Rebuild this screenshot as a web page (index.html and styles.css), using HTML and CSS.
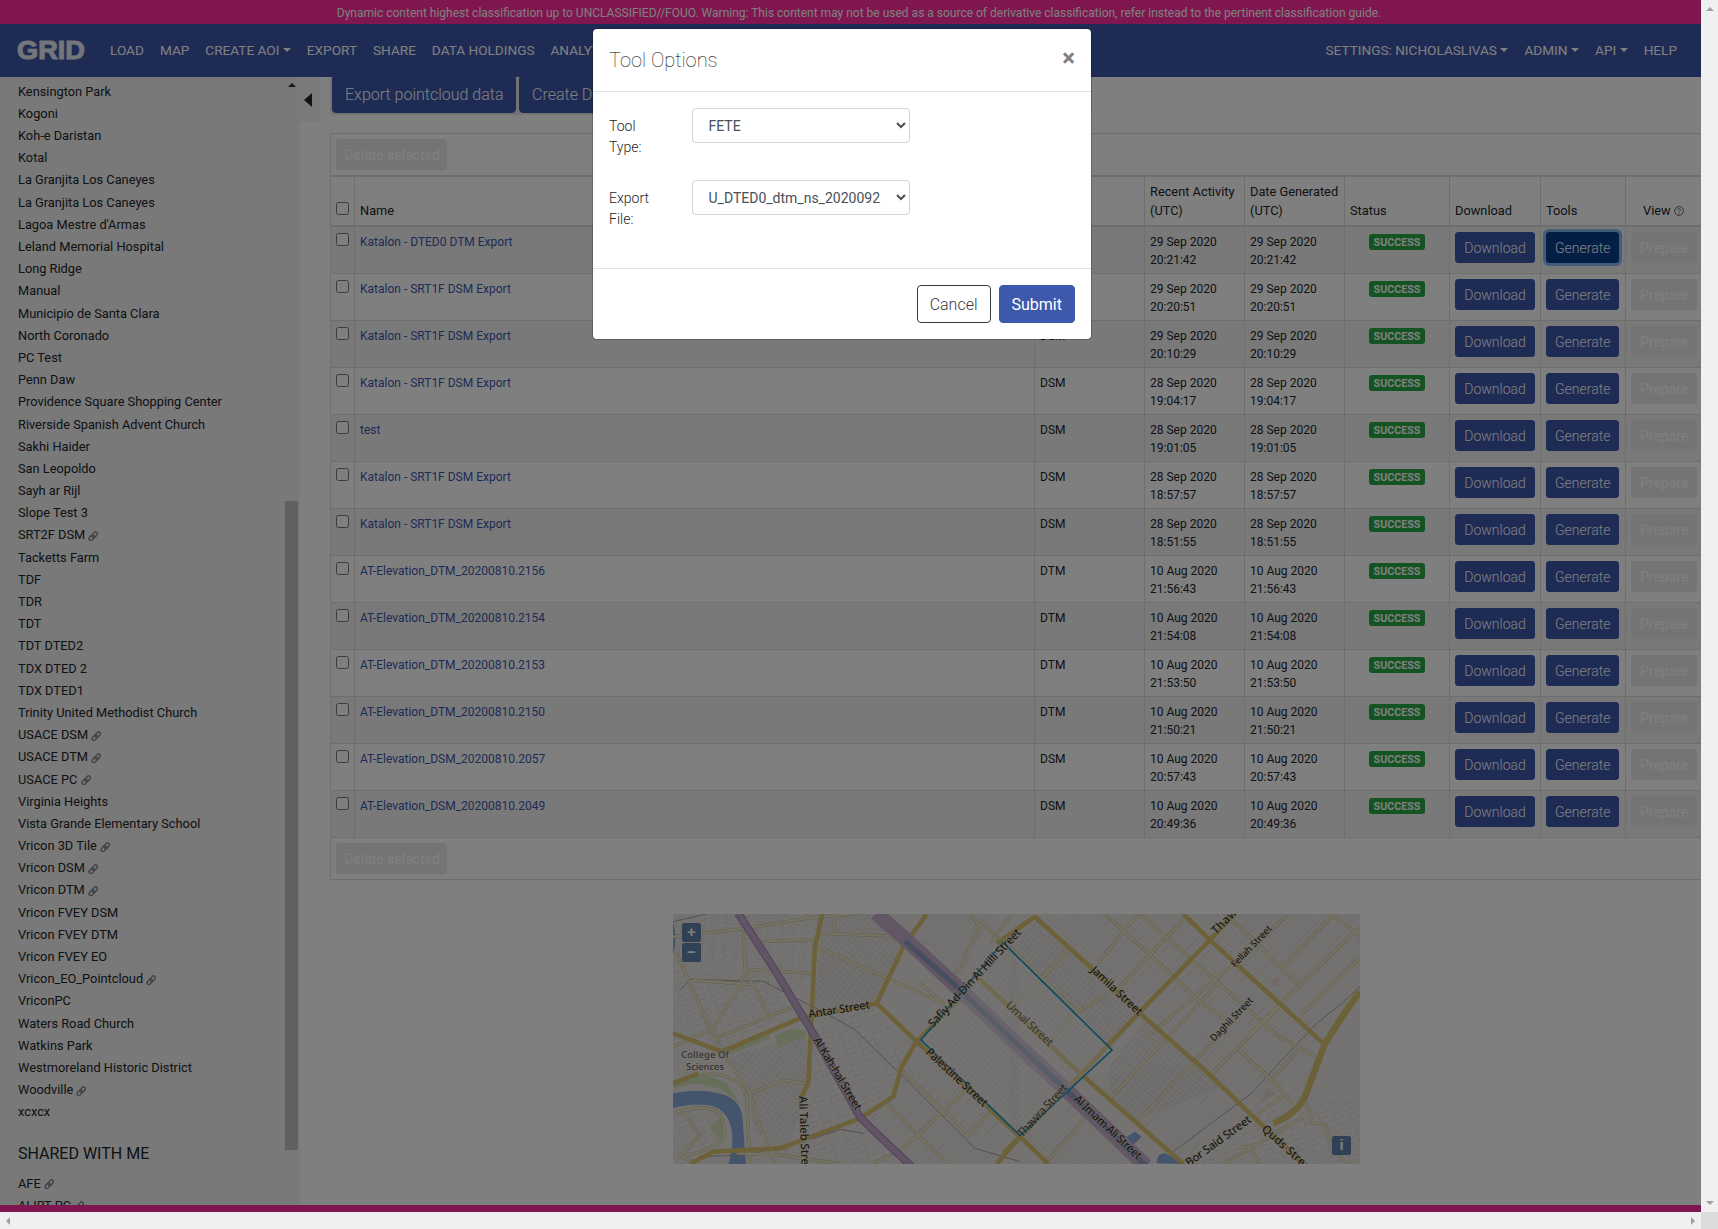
FILE: index.html
```html
<!DOCTYPE html>
<html lang="en">
<head>
<meta charset="utf-8">
<title>GRID</title>
<link rel="stylesheet" href="styles.css">
</head>
<body>
<svg class="defs" width="0" height="0">
  <symbol id="link" viewBox="0 0 10 10"><g fill="none" stroke="currentColor" stroke-width="1.4"><rect x="-2.9" y="-1.7" width="5.8" height="3.4" rx="1.7" transform="translate(3.5 6.5) rotate(-52)"/><rect x="-2.9" y="-1.7" width="5.8" height="3.4" rx="1.7" transform="translate(6.5 3.5) rotate(-52)"/></g></symbol>
</svg>
<div class="viewport">
  <div class="page">
    <div class="banner">Dynamic content highest classification up to UNCLASSIFIED//FOUO. Warning: This content may not be used as a source of derivative classification, refer instead to the pertinent classification guide.</div>
    <nav class="navbar">
      <svg class="logo" width="70" height="30" viewBox="0 0 70 30"><text x="0" y="23.500" textLength="68" lengthAdjust="spacingAndGlyphs">GRID</text></svg>
      <div class="nav-left"><a>LOAD</a><a>MAP</a><a class="drop">CREATE AOI</a><a>EXPORT</a><a>SHARE</a><a>DATA HOLDINGS</a><a>ANALYTICS</a></div>
      <div class="nav-right"><a class="drop">SETTINGS: NICHOLASLIVAS</a><a class="drop">ADMIN</a><a class="drop">API</a><a>HELP</a></div>
    </nav>
    <div class="content">
      <aside class="sidebar">
        <div class="lists">
          <ul>
            <li>Kensington Park</li><li>Kogoni</li><li>Koh-e Daristan</li><li>Kotal</li><li>La Granjita Los Caneyes</li><li>La Granjita Los Caneyes</li><li>Lagoa Mestre d'Armas</li><li>Leland Memorial Hospital</li><li>Long Ridge</li><li>Manual</li><li>Municipio de Santa Clara</li><li>North Coronado</li><li>PC Test</li><li>Penn Daw</li><li>Providence Square Shopping Center</li><li>Riverside Spanish Advent Church</li><li>Sakhi Haider</li><li>San Leopoldo</li><li>Sayh ar Rijl</li><li>Slope Test 3</li>
            <li>SRT2F DSM <svg><use href="#link"/></svg></li><li>Tacketts Farm</li><li>TDF</li><li>TDR</li><li>TDT</li><li>TDT DTED2</li><li>TDX DTED 2</li><li>TDX DTED1</li><li>Trinity United Methodist Church</li>
            <li>USACE DSM <svg><use href="#link"/></svg></li><li>USACE DTM <svg><use href="#link"/></svg></li><li>USACE PC <svg><use href="#link"/></svg></li><li>Virginia Heights</li><li>Vista Grande Elementary School</li>
            <li>Vricon 3D Tile <svg><use href="#link"/></svg></li><li>Vricon DSM <svg><use href="#link"/></svg></li><li>Vricon DTM <svg><use href="#link"/></svg></li><li>Vricon FVEY DSM</li><li>Vricon FVEY DTM</li><li>Vricon FVEY EO</li>
            <li>Vricon_EO_Pointcloud <svg><use href="#link"/></svg></li><li>VriconPC</li><li>Waters Road Church</li><li>Watkins Park</li><li>Westmoreland Historic District</li><li>Woodville <svg><use href="#link"/></svg></li><li>xcxcx</li>
          </ul>
          <h2>SHARED WITH ME</h2>
          <ul><li>AFE <svg><use href="#link"/></svg></li><li>ALIRT PC <svg><use href="#link"/></svg></li></ul>
        </div>
        <div class="side-scroll"><i class="up"></i><div class="thumb"></div></div>
      </aside>
      <div class="collapse"><i></i></div>
      <main>
        <div class="actions"><div class="group"><button class="btn">Export pointcloud data</button><button class="btn">Create DSM/DTM Export</button><button class="btn grow">Create Other</button></div></div>
        <section class="exports">
          <div class="tools top"><button class="btn sm off">Delete selected</button></div>
          <table>
            <colgroup><col class="c1"><col class="c2"><col class="c3"><col class="c4"><col class="c4"><col class="c5"><col class="c6"><col class="c7"><col class="c8"></colgroup>
            <thead><tr><th><input type="checkbox"></th><th>Name</th><th>Type</th><th>Recent Activity (UTC)</th><th>Date Generated (UTC)</th><th>Status</th><th>Download</th><th>Tools</th><th class="view">View <svg width="10" height="10" viewBox="0 0 10 10"><circle cx="5" cy="5" r="4.4" fill="none" stroke="currentColor"/><path d="M3.5 4a1.5 1.3 0 1 1 2.2 1.1Q5 5.4 5 6M5 7v1" fill="none" stroke="currentColor"/></svg></th></tr></thead>
            <tbody>
            <tr><td><input type="checkbox"></td><td><a>Katalon - DTED0 DTM Export</a></td><td>DTM</td><td>29 Sep 2020 20:21:42</td><td>29 Sep 2020 20:21:42</td><td><b>SUCCESS</b></td><td><button class="btn sm">Download</button></td><td><button class="btn sm focus">Generate</button></td><td><button class="btn sm off">Prepare</button></td></tr>
            <tr><td><input type="checkbox"></td><td><a>Katalon - SRT1F DSM Export</a></td><td>DSM</td><td>29 Sep 2020 20:20:51</td><td>29 Sep 2020 20:20:51</td><td><b>SUCCESS</b></td><td><button class="btn sm">Download</button></td><td><button class="btn sm">Generate</button></td><td><button class="btn sm off">Prepare</button></td></tr>
            <tr><td><input type="checkbox"></td><td><a>Katalon - SRT1F DSM Export</a></td><td>DSM</td><td>29 Sep 2020 20:10:29</td><td>29 Sep 2020 20:10:29</td><td><b>SUCCESS</b></td><td><button class="btn sm">Download</button></td><td><button class="btn sm">Generate</button></td><td><button class="btn sm off">Prepare</button></td></tr>
            <tr><td><input type="checkbox"></td><td><a>Katalon - SRT1F DSM Export</a></td><td>DSM</td><td>28 Sep 2020 19:04:17</td><td>28 Sep 2020 19:04:17</td><td><b>SUCCESS</b></td><td><button class="btn sm">Download</button></td><td><button class="btn sm">Generate</button></td><td><button class="btn sm off">Prepare</button></td></tr>
            <tr><td><input type="checkbox"></td><td><a>test</a></td><td>DSM</td><td>28 Sep 2020 19:01:05</td><td>28 Sep 2020 19:01:05</td><td><b>SUCCESS</b></td><td><button class="btn sm">Download</button></td><td><button class="btn sm">Generate</button></td><td><button class="btn sm off">Prepare</button></td></tr>
            <tr><td><input type="checkbox"></td><td><a>Katalon - SRT1F DSM Export</a></td><td>DSM</td><td>28 Sep 2020 18:57:57</td><td>28 Sep 2020 18:57:57</td><td><b>SUCCESS</b></td><td><button class="btn sm">Download</button></td><td><button class="btn sm">Generate</button></td><td><button class="btn sm off">Prepare</button></td></tr>
            <tr><td><input type="checkbox"></td><td><a>Katalon - SRT1F DSM Export</a></td><td>DSM</td><td>28 Sep 2020 18:51:55</td><td>28 Sep 2020 18:51:55</td><td><b>SUCCESS</b></td><td><button class="btn sm">Download</button></td><td><button class="btn sm">Generate</button></td><td><button class="btn sm off">Prepare</button></td></tr>
            <tr><td><input type="checkbox"></td><td><a>AT-Elevation_DTM_20200810.2156</a></td><td>DTM</td><td>10 Aug 2020 21:56:43</td><td>10 Aug 2020 21:56:43</td><td><b>SUCCESS</b></td><td><button class="btn sm">Download</button></td><td><button class="btn sm">Generate</button></td><td><button class="btn sm off">Prepare</button></td></tr>
            <tr><td><input type="checkbox"></td><td><a>AT-Elevation_DTM_20200810.2154</a></td><td>DTM</td><td>10 Aug 2020 21:54:08</td><td>10 Aug 2020 21:54:08</td><td><b>SUCCESS</b></td><td><button class="btn sm">Download</button></td><td><button class="btn sm">Generate</button></td><td><button class="btn sm off">Prepare</button></td></tr>
            <tr><td><input type="checkbox"></td><td><a>AT-Elevation_DTM_20200810.2153</a></td><td>DTM</td><td>10 Aug 2020 21:53:50</td><td>10 Aug 2020 21:53:50</td><td><b>SUCCESS</b></td><td><button class="btn sm">Download</button></td><td><button class="btn sm">Generate</button></td><td><button class="btn sm off">Prepare</button></td></tr>
            <tr><td><input type="checkbox"></td><td><a>AT-Elevation_DTM_20200810.2150</a></td><td>DTM</td><td>10 Aug 2020 21:50:21</td><td>10 Aug 2020 21:50:21</td><td><b>SUCCESS</b></td><td><button class="btn sm">Download</button></td><td><button class="btn sm">Generate</button></td><td><button class="btn sm off">Prepare</button></td></tr>
            <tr><td><input type="checkbox"></td><td><a>AT-Elevation_DSM_20200810.2057</a></td><td>DSM</td><td>10 Aug 2020 20:57:43</td><td>10 Aug 2020 20:57:43</td><td><b>SUCCESS</b></td><td><button class="btn sm">Download</button></td><td><button class="btn sm">Generate</button></td><td><button class="btn sm off">Prepare</button></td></tr>
            <tr><td><input type="checkbox"></td><td><a>AT-Elevation_DSM_20200810.2049</a></td><td>DSM</td><td>10 Aug 2020 20:49:36</td><td>10 Aug 2020 20:49:36</td><td><b>SUCCESS</b></td><td><button class="btn sm">Download</button></td><td><button class="btn sm">Generate</button></td><td><button class="btn sm off">Prepare</button></td></tr>
            </tbody>
          </table>
          <div class="tools"><button class="btn sm off">Delete selected</button></div>
        </section>
        <div class="map">
          <svg width="687" height="250" viewBox="0 0 687 250">
            <defs>
              <pattern id="h1" width="30" height="14" patternUnits="userSpaceOnUse" patternTransform="rotate(-50)"><path d="M0 0H30M0 0V14M15 7V14M0 7H30" class="min"/></pattern>
              <pattern id="h2" width="26" height="11" patternUnits="userSpaceOnUse" patternTransform="rotate(42)"><path d="M0 0H26M0 0V11" class="min"/></pattern>
              <pattern id="h3" width="34" height="22" patternUnits="userSpaceOnUse" patternTransform="rotate(4)"><path d="M0 0H34M0 0V22M20 11H34" class="min"/></pattern>
              <pattern id="h4" width="46" height="34" patternUnits="userSpaceOnUse" patternTransform="rotate(-20)"><path d="M0 0H46M0 0V34M0 17H30" class="min"/></pattern>
              <path id="secl" d="M39 110L260 85 440 55 600 40M250 85L255 210 325 345M50 160L130 340 185 450 270 580 300 680 345 792M100 240L285 255M260 208L455 220M165 415L400 320M155 390L240 260 255 210M39 440L150 390M300 125L480 118M480 100L690 108 740 130M470 140L850 310 780 250M525 50L520 98M960 60L1030 130M930 42L960 80 905 190 880 230M130 520Q240 520 260 590L270 792M270 580L370 540 440 552M39 640Q190 590 193 690 195 740 70 770M70 640L120 705 60 770 115 790M730 515L850 630 927 705 1000 625M850 635L730 745 640 790M680 610L860 792M850 630L915 570M230 760L360 765 540 792"/>
              <path id="secr" d="M285 42L415 160 570 305 650 360M390 42L545 180 705 320 800 405 925 475M385 42L320 120 265 190M520 60L320 270 200 335 120 420M175 150L95 235M630 245L300 595M835 42L700 170 410 410M705 325L540 500 380 665M820 310L600 525M650 42L810 200 870 255M970 42L815 205M965 42L1050 110M1050 80L870 255 720 400M1050 175L870 345M680 445L775 530 850 610M870 445L780 545M740 645L815 590M0 140L200 335M0 330L90 240M885 600L910 670 945 670 965 740 1010 792M640 792L880 650M225 660L115 780M-60 130L0 50M690 740L715 740 750 792"/>
            </defs>
            <rect width="687" height="250" fill="#e9e7e3"/>
            <g transform="translate(-13 -14) scale(.33333)">
              <path fill="url(#h3)" d="M39 42H480L450 230 330 330 250 180 39 200z"/>
              <path fill="url(#h4)" d="M39 200L250 230 400 330 170 460 39 380zM450 400L640 320 760 430 700 600 600 660 440 690z"/>
              <path fill="url(#h1)" d="M210 470L440 400V570L380 760 290 700zM490 42H630L740 130 640 310 460 330z"/>
              <path fill="url(#h2)" d="M760 100L800 42H1000L900 240zM480 150L700 230 650 300 470 300zM680 600L780 440 1080 720 1010 790H760L620 650z"/>
              <path fill="url(#h1)" d="M790 420L1028 130 1080 180V720z"/>
              <path fill="url(#h4)" d="M39 640L190 620 180 740 39 780zM270 770L600 670 740 790H270z"/>
              <path fill="#cfdcb4" d="M345 405l60-20 35 10-5 15-80 30zM39 545l90-25 70 30 40 60-60-45-70-15-70 15zM150 680l40-30v80zM210 450l120-50v15l-120 50z"/>
              <path fill="#86a9d8" d="M39 580Q120 562 195 585 245 605 248 660L258 792H205Q222 740 215 690 200 620 140 615 90 610 39 625zM39 65q15 50 0 100z"/>
              <g class="rail"><path d="M39 65L140 42M60 270L90 238 310 244 520 352 585 390 740 540 890 690 945 745 1080 785M115 770L260 765 470 712 540 688 610 700"/></g>
              <use href="#secl" class="case"/>
              <use href="#secl" class="sec"/>
              <g class="pri"><path d="M487 42L465 140 455 340 445 550 420 600M39 550L115 520M39 400L185 455 420 355 650 310 730 140 800 42M650 310L770 425 725 500 700 590 600 655 360 745 160 755 90 792M770 425L905 290M770 425L1080 710 1010 792"/></g>
            </g>
            <g transform="translate(337 -14) scale(.33333)">
              <path fill="url(#h1)" d="M0 130L75 60 400 340 305 445zM410 350L640 560 380 660 300 600 300 500zM0 160L305 450 30 705 0 690z"/>
              <path fill="url(#h2)" d="M90 50L520 42 600 120 390 330zM400 330L600 130 940 430 730 640zM600 42H1050V270L940 420 610 120z"/>
              <path fill="url(#h2)" d="M220 530L520 792 720 650 580 500zM40 710L200 600 390 792H120zM950 440L790 620 880 600z"/>
              <path fill="url(#h4)" d="M740 650L880 590 1050 600V792H520z"/>
              <path fill="#86a9d8" d="M440 790q0-30 25-30l60 32zM350 710l25-15 20 15-25 25z"/>
              <path fill="#e4d3cf" d="M780 245l35-20-15 35zM750 610l20-45 30 15z"/>
              <g class="rail"><path d="M1050 260L990 315 920 370 820 475 725 580 610 665 490 755"/></g>
              <use href="#secr" class="case"/>
              <use href="#secr" class="sec"/>
              <g class="pri"><path d="M-40 130L75 50 240 200 390 340 600 525 730 650 880 792M520 42L600 120 940 430M675 42L600 120 390 335 215 520 30 710-20 760M-110 220L210 520 520 792M30 710L115 792"/></g>
              <g class="pri wide"><path d="M1050 275L1010 330 945 430 885 590Q860 640 790 670"/></g>
            </g>
            <path class="motorway" d="M203-1L240 32 283 72 345 131 390 173 473 252"/>
            <path class="median" d="M232 27L283 72 345 131 390 173 473 252"/>
            <path class="trunk-case" d="M65-1L100 53 140 119 187 203 200 216 238 252"/>
            <path class="trunk" d="M65-1L100 53 140 119 187 203 200 216 238 252"/>
            <path class="aoi" d="M330 28.500L439 136 347 221.500 248 126z"/>
            <g class="lbl">
              <text transform="translate(136 104) rotate(-9)" textLength="62">Antar Street</text>
              <text transform="translate(140 126) rotate(59)" textLength="83">Al Kah-hal Street</text>
              <text transform="translate(126 182) rotate(88)" textLength="80">Ali Taleb Street</text>
              <text transform="translate(260 114) rotate(-47)" textLength="130">Safiy Ad-Din Al Hilli Street</text>
              <text transform="translate(252 139) rotate(43)" textLength="80">Palestine Street</text>
              <text transform="translate(332 92) rotate(43)" textLength="60" opacity=".6">Umal Street</text>
              <text transform="translate(417 57) rotate(43)" textLength="66">Jamila Street</text>
              <text transform="translate(543 21) rotate(-45)" textLength="82">Thawra Street</text>
              <text class="s" transform="translate(562 54) rotate(-46)" textLength="54">Fellah Street</text>
              <text class="s" transform="translate(541 128) rotate(-46)" textLength="57">Daghil Street</text>
              <text transform="translate(349 224) rotate(-47)" textLength="68" opacity=".75">Thawra Street</text>
              <text transform="translate(400 186) rotate(43)" textLength="88">Al Imam Ali Street</text>
              <text transform="translate(516 253) rotate(-36)" textLength="78">Bor Said Street</text>
              <text transform="translate(588 216) rotate(42)" textLength="66">Quds Street</text>
              <text class="p" x="8" y="144" textLength="48">College Of</text>
              <text class="p" x="13" y="156" textLength="38">Sciences</text>
            </g>
          </svg>
          <div class="zoom"><span>+</span><span>−</span></div>
          <div class="info">i</div>
        </div>
      </main>
    </div>
    <div class="foot"></div>
    <div class="backdrop">
      <div class="modal">
        <header><h1>Tool Options</h1><span class="close">×</span></header>
        <div class="body">
          <div class="field"><label>Tool Type:</label><select><option>FETE</option></select></div>
          <div class="field"><label>Export File:</label><select><option>U_DTED0_dtm_ns_2020092</option></select></div>
        </div>
        <footer><button class="btn line">Cancel</button><button class="btn submit">Submit</button></footer>
      </div>
    </div>
  </div>
  <div class="vbar"><i class="up"></i><i class="down"></i></div>
  <div class="hbar"><i class="left"></i><i class="right"></i></div>
  <div class="corner"></div>
</div>
</body>
</html>
```
FILE: styles.css
```css
*{box-sizing:border-box}
body{margin:0;font-family:Roboto,"Liberation Sans",sans-serif;color:#212529;overflow:hidden}
ul,h1,h2{margin:0;padding:0;list-style:none;font-weight:400}
.defs{position:absolute}
.viewport{display:grid;grid-template:1212px 17px/1701px 17px;width:1718px;height:1229px}
.page{position:relative;display:flex;flex-direction:column;overflow:hidden;background:#fff}
.banner{flex:none;height:24px;background:#ff2c9e;color:#fff;font-size:12px;line-height:26px;text-align:center;padding-left:17px;white-space:nowrap}
.navbar{flex:none;height:53px;background:#3d57ab;display:flex;align-items:center;padding:0 16px 2px 17px;color:#fff;font-size:13.6px}
.logo{margin-right:15px;overflow:visible;fill:#e8ecf4;font:bold 26px "Liberation Sans",Arial,sans-serif;stroke:#e8ecf4;stroke-width:1}
.nav-left,.nav-right{display:flex}
.nav-right{margin-left:auto}
.navbar a{padding:0 8px;white-space:nowrap;line-height:20px}
.drop::after{content:"";display:inline-block;margin-left:3.5px;vertical-align:3px;border:4px solid transparent;border-top-color:currentColor;border-bottom:0}
.content{flex:1;display:flex;min-height:0}
.sidebar{width:300px;background:#f2f2f2;display:flex;overflow:hidden}
.lists{flex:1;padding:3.7px 0 0 18px;font-size:12.8px;white-space:nowrap}
.lists li{height:22.2px;line-height:22.2px}
.lists svg{width:10.5px;height:10.5px;color:#888;vertical-align:-2px}
.lists h2{font-size:16px;line-height:20px;margin:20px 0 9px}
.side-scroll{width:15px;padding:6px 2px 0 0}
.side-scroll i{display:block;margin:0 auto}
.thumb{height:649px;margin-top:414px;background:#c1c1c1}
.up{width:0;border:4px solid transparent;border-bottom-color:#333;border-top:0}
.collapse{width:20px;height:45px;background:#f5f5f5;border-radius:0 0 3px 0;padding:16px 0 0 4px}
.collapse i{display:block;width:0;border:7px solid transparent;border-width:7px 8px 7px 0;border-right-color:#212529}
main{flex:1;min-width:0;padding-left:10px}
.actions{height:39px;overflow:hidden}
.group{width:762px;margin-top:-4px;height:42px;display:flex;gap:3px;background:#e6e6e8;border-radius:0 0 4px 4px;padding:2px}
.group .btn{padding-top:7px;padding-bottom:5px}
.btn{font:300 16px/24px Roboto,sans-serif;padding:6px 12px;border:1px solid #3d57ab;background:#3d57ab;color:#fff;border-radius:4px;white-space:nowrap}
.group .btn:first-child{width:184px}
.grow{flex:1}
.sm{font-size:14px;line-height:21px;padding:5px 8px 3px;border-radius:3px;display:block}
.off{background:#e9e9e9;border-color:#e9e9e9;color:#fff;font-weight:400}
.focus{background:#073e8c;border-color:#073e8c;box-shadow:0 0 0 3px #86b8ee}
.exports{margin-top:17px;border:1px solid #dcdcde;border-right:0;width:1386px}
.tools{padding:5px;height:41px}
.tools.top{border-bottom:2px solid #dcdcde;height:43px}
.tools .off{width:111px;padding-left:1px;padding-right:0}
table{width:1385px;table-layout:fixed;border-collapse:separate;border-spacing:0;font-size:12px}
.c1{width:23px}.c2{width:680px}.c3{width:110px}.c4{width:100px}.c5{width:105px}.c6{width:91px}.c7{width:85px}.c8{width:91px}
th{height:50px;font-size:12.8px;font-weight:400;line-height:19px;text-align:left;vertical-align:bottom;padding:0 5px 5px;border-bottom:2px solid #dcdcde;border-left:1px solid #dcdcde}
th:first-child,td:first-child{border-left:0;padding-right:0}
th.view{padding-left:17px}
.view svg{color:#666;vertical-align:-1px}
td{height:47px;vertical-align:top;line-height:18px;padding:6px 20px 0 5px;border-bottom:1px solid #dcdcde;border-left:1px solid #dcdcde}
td a{color:#3d57ab}
td:first-child{padding-top:5px}
td:nth-child(n+6){padding-right:0;padding-top:5px}
td:nth-child(6){text-align:center;padding-right:5px}
tbody tr:nth-child(odd){background:#f2f2f2}
td .btn{width:80px;text-align:center}
td:nth-child(8) .btn{width:73px}
td:nth-child(9) .btn{width:66px}
input{display:block;margin:0;width:13px;height:13px}
td input{margin-top:1px}
th input{margin-bottom:5px}
td b{display:inline-block;width:56px;height:16px;margin-top:2px;border-radius:3px;background:#28a745;color:#fff;font-size:10.7px;line-height:17px}
.map{position:relative;width:687px;height:250px;margin:34px 0 0 343px;overflow:hidden}
.map>svg{display:block}
.min{stroke:#cbc8c6;stroke-width:2;fill:none}
.rail{fill:none;stroke:#a5a3a5;stroke-width:3}
.case{fill:none;stroke:#c9c5a8;stroke-width:10;stroke-linejoin:round}
.sec{fill:none;stroke:#ebe7c4;stroke-width:6;stroke-linejoin:round}
.pri{fill:none;stroke:#dbc273;stroke-width:14;stroke-linejoin:round}
.pri.wide{stroke-width:20}
.motorway{fill:none;stroke:#c6aecb;stroke-width:15}
.median{fill:none;stroke:#8f9dc0;stroke-width:5.5}
.trunk-case{fill:none;stroke:#a58cb0;stroke-width:8}
.trunk{fill:none;stroke:#c3a9ce;stroke-width:5.5}
.aoi{fill:rgba(240,240,240,.35);stroke:#1f93c4;stroke-width:1.7}
.lbl{font:500 11.5px "Noto Sans",sans-serif;fill:#3c362c;stroke:#f3efe2;stroke-width:1.5;stroke-opacity:.5;paint-order:stroke}
.lbl .s{font-size:9.5px}
.lbl .p{font-size:9.5px;fill:#666}
.zoom{position:absolute;left:9px;top:9px;width:19px;display:grid;gap:1px}
.zoom span,.info{height:19px;width:19px;background:#6282ab;color:#fff;font:700 15px/18px "Liberation Sans",sans-serif;text-align:center;border-radius:2px}
.info{position:absolute;right:9px;bottom:9px;width:19px}
.foot{flex:none;height:7px;background:#ff2c9e}
.backdrop{position:absolute;inset:0;background:rgba(0,0,0,.5);padding:28px 0 0 592px}
.modal{width:500px;height:312px;background:#fff;background-clip:padding-box;border:1px solid rgba(0,0,0,.2);border-radius:5px;display:flex;flex-direction:column}
.modal header{height:63px;display:flex;justify-content:space-between;padding:16px 16px 0 16px;border-bottom:1px solid #dee2e6}
h1{font-size:20px;font-weight:100;line-height:31px;color:#000}
.close{font:700 24px/26px Roboto,sans-serif;color:#7f7f7f}
.body{flex:1;padding:16px}
.field{display:flex;height:72px}
.field label{width:83px;padding:8px 30px 0 0;font-size:14px;font-weight:300;line-height:21px}
select{width:218px;height:35px;border:1px solid #ced4da;border-radius:4px;background:#fff;color:#495057;font:400 14px Roboto,sans-serif;padding:0 1px 0 11.5px}
.modal footer{height:71px;border-top:1px solid #dee2e6;display:flex;justify-content:flex-end;gap:8px;padding:16px}
.modal .btn{height:38px;padding:7px 12px 5px}
.modal .line{background:#fff;border-color:#343a40;color:#343a40}
.modal .submit{background:#3d59ab;font-weight:400}
.vbar,.hbar{background:#f0f0f0;display:flex;justify-content:space-between;align-items:center}
.vbar{flex-direction:column;padding:7px 0}
.hbar{padding:0 6px}
.vbar i,.hbar i{width:0;height:0;border:4px solid transparent}
.vbar .up{border-bottom-color:#a0a0a0;border-top:0}
.vbar .down{border-top-color:#a0a0a0;border-bottom:0}
.hbar .left{border-right-color:#a0a0a0;border-left:0}
.hbar .right{border-left-color:#a0a0a0;border-right:0}
.corner{background:#dcdcdc}
```
